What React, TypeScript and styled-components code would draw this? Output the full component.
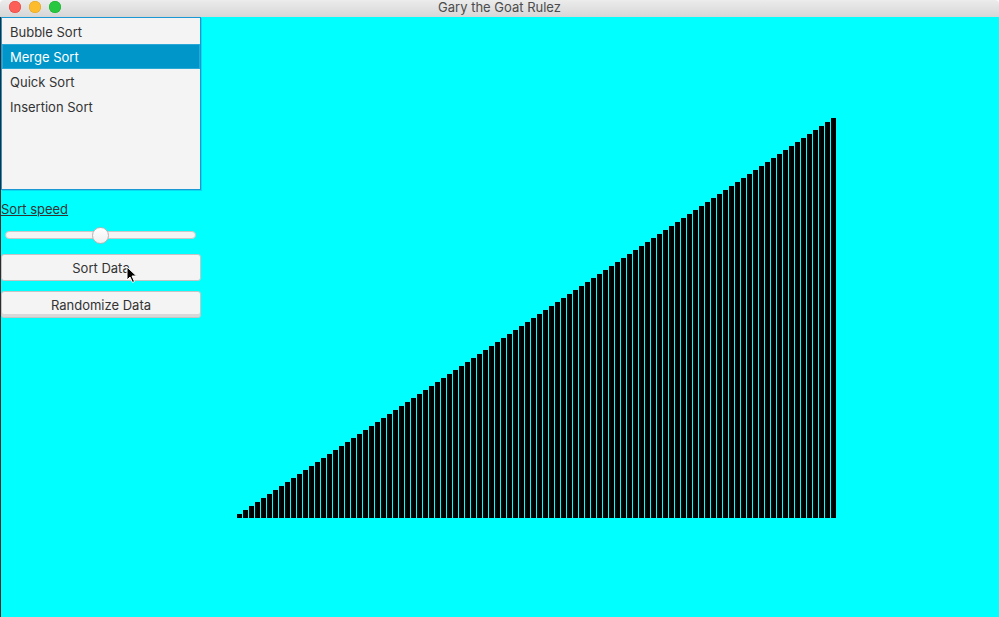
import React from "react";
import styled, { createGlobalStyle } from "styled-components";

const Global = createGlobalStyle`
  html, body { margin: 0; padding: 0; background: #ffffff; }
  body { font-family: Inter, "Liberation Sans", sans-serif; overflow: hidden; }
`;

const Window = styled.div`
  width: 999px;
  height: 617px;
  display: flex;
  flex-direction: column;
  position: relative;
  overflow: hidden;
`;

const TitleBar = styled.div`
  height: 17px;
  flex: none;
  position: relative;
  display: flex;
  align-items: center;
  justify-content: center;
  background: linear-gradient(#ececec, #d6d6d6);
  border-radius: 4px 4px 0 0;
`;

const Lights = styled.div`
  position: absolute;
  left: 9px;
  top: 1px;
  display: flex;
  gap: 8px;
`;

const Light = styled.span<{ $c: string; $b: string }>`
  width: 12px;
  height: 12px;
  border-radius: 50%;
  background: ${(p) => p.$c};
  box-shadow: inset 0 0 0 0.5px ${(p) => p.$b};
`;

const Title = styled.div`
  font-size: 13px;
  color: #4c4c4c;
  line-height: 17px;
  margin-top: -2px;
`;

const Content = styled.div`
  flex: 1;
  display: flex;
  background: #00ffff;
  border-left: 1px solid #2b2b2b;
  position: relative;
`;

const Sidebar = styled.div`
  width: 200px;
  flex: none;
  display: flex;
  flex-direction: column;
`;

const List = styled.div`
  height: 173px;
  box-sizing: border-box;
  background: #f4f4f4;
  border: 1px solid #1a98d4;
  box-shadow: 1px 1px 0 0 rgba(30, 150, 210, 0.35);
  padding-top: 1px;
`;

const Item = styled.div<{ $sel?: boolean }>`
  height: 25px;
  box-sizing: border-box;
  padding-left: 7px;
  display: flex;
  align-items: center;
  font-size: 13px;
  color: ${(p) => (p.$sel ? "#ffffff" : "#333333")};
  background: ${(p) => (p.$sel ? "#0096c9" : "transparent")};
  border: 1px solid ${(p) => (p.$sel ? "#2aa9d6" : "transparent")};
`;

const SpeedLabel = styled.div`
  margin-top: 12px;
  font-size: 13px;
  color: #333333;
  text-decoration: underline;
  line-height: 15px;
  height: 15px;
`;

const SliderRow = styled.div`
  height: 24px;
  margin-top: 6px;
  padding: 0 5px 0 4px;
  display: flex;
  align-items: center;
  position: relative;
`;

const Track = styled.div`
  flex: 1;
  height: 6px;
  border-radius: 4px;
  background: #f4f4f4;
  border: 1px solid #c8c8c8;
  position: relative;
`;

const Thumb = styled.div`
  position: absolute;
  left: 86px;
  top: -5px;
  width: 15px;
  height: 15px;
  border-radius: 50%;
  background: linear-gradient(#ffffff, #f0f0f0);
  border: 1px solid #b4b4b4;
`;

const Button = styled.div<{ $bottom?: boolean }>`
  height: 27px;
  box-sizing: border-box;
  display: flex;
  align-items: center;
  justify-content: center;
  font-size: 13px;
  color: #333333;
  background: #f4f4f4;
  border: 1px solid #c4c4c4;
  border-radius: 3px;
  margin-top: ${(p) => (p.$bottom ? "10px" : "7px")};
  box-shadow: ${(p) => (p.$bottom ? "inset 0 -3px 0 #d8d8d8" : "none")};
  position: relative;
`;

const Canvas = styled.div`
  flex: 1;
  position: relative;
`;

const Cursor = styled.svg`
  position: absolute;
  left: 125px;
  top: 249px;
`;

const bars = Array.from({ length: 100 }, (_, i) => i);

export default function App() {
  return (
    <>
      <Global />
      <Window>
        <TitleBar>
          <Lights>
            <Light $c="#fc5f57" $b="#e0443e" />
            <Light $c="#fdbc2e" $b="#dea123" />
            <Light $c="#27c840" $b="#1aab29" />
          </Lights>
          <Title>Gary the Goat Rulez</Title>
        </TitleBar>
        <Content>
          <Sidebar>
            <List>
              <Item>Bubble Sort</Item>
              <Item $sel>Merge Sort</Item>
              <Item>Quick Sort</Item>
              <Item>Insertion Sort</Item>
            </List>
            <SpeedLabel>Sort speed</SpeedLabel>
            <SliderRow>
              <Track>
                <Thumb />
              </Track>
            </SliderRow>
            <Button>Sort Data</Button>
            <Button $bottom>Randomize Data</Button>
          </Sidebar>
          <Canvas>
            <svg width="798" height="600" style={{ display: "block" }}>
              {bars.map((i) => (
                <rect
                  key={i}
                  x={36 + 6 * i}
                  y={501 - 4 * (i + 1)}
                  width={5}
                  height={4 * (i + 1)}
                  fill="#000000"
                />
              ))}
            </svg>
          </Canvas>
          <Cursor width="12" height="18" viewBox="0 0 12 18">
            <path
              d="M1 1 L1 14 L4 11 L6.5 16.5 L8.5 15.5 L6 10 L10.5 10 Z"
              fill="#000"
              stroke="#fff"
              strokeWidth="1"
            />
          </Cursor>
        </Content>
      </Window>
    </>
  );
}
